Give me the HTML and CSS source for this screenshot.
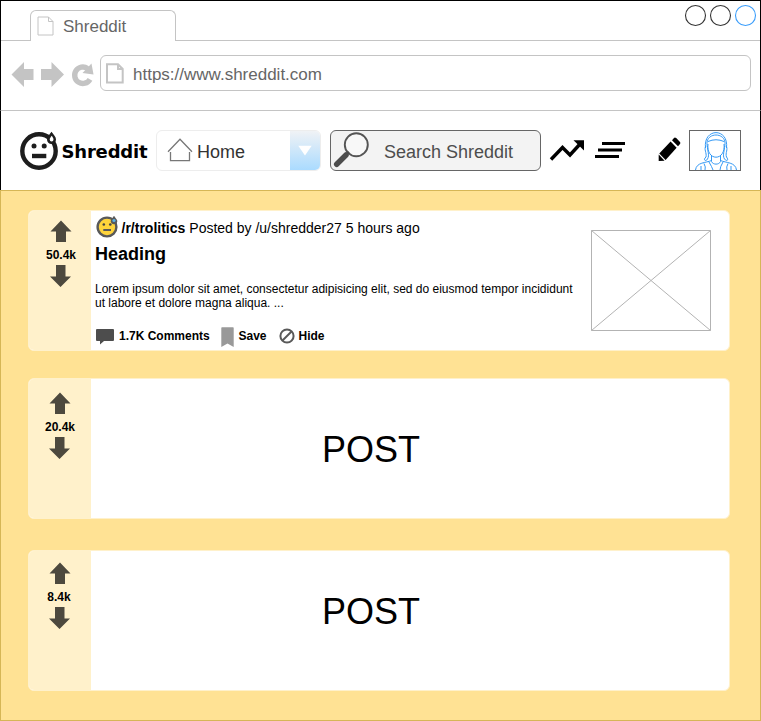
FILE: index.html
```html
<!DOCTYPE html>
<html lang="en">
<head>
<meta charset="utf-8">
<title>Shreddit</title>
<link rel="stylesheet" href="styles.css">
</head>
<body>
<svg class="defs" width="0" height="0">
  <symbol id="up" viewBox="0 0 22 22"><path d="M11 0.5 21.5 11.5H16V22H6V11.5H0.5Z" fill="#4d493e"/></symbol>
  <symbol id="down" viewBox="0 0 22 22"><path d="M10.500 22 21 11.500H15.500V0H6V11.500H0Z" fill="#4d493e"/></symbol>
</svg>
<div class="window">
  <header class="tabs">
    <div class="tab">
      <svg class="tab-icon" width="17" height="20" viewBox="36.5 16.5 17 20"><path d="M37.5 17.5H48L52.5 22V35.5H37.5ZM48 17.5V22H52.5" fill="#fff" stroke="#c4c4c4"/></svg>
      <span class="tab-title">Shreddit</span>
    </div>
    <svg class="controls" width="74" height="24" viewBox="684 4 74 24" fill="none" stroke-width="1.1"><circle cx="695.5" cy="15.5" r="10" stroke="#333"/><circle cx="720.5" cy="15.5" r="10" stroke="#333"/><circle cx="745.5" cy="15.5" r="10" stroke="#3a9dfb"/></svg>
  </header>
  <div class="address-row">
    <svg width="84" height="30" viewBox="11 60 84 30" fill="#c4c4c4"><path d="M11.500 74.500 24 62V69H33.500V80H24V87Z"/><path d="M64 74.500 51.500 62V69H41V80H51.500V87Z"/><path d="M90 79.300A8.200 8.200 0 1 1 87.500 68.500" fill="none" stroke="#c4c4c4" stroke-width="5.400"/><path d="M91.500 63.500 93.500 74.500 82.500 73Z"/></svg>
    <div class="address">
      <svg width="18" height="21" viewBox="106 63 18 21"><path d="M107 64.300H118L122.700 69V82.500H107ZM118 64.300V69H122.700" fill="#fff" stroke="#c4c4c4" stroke-width="2"/></svg>
      <span>https://www.shreddit.com</span>
    </div>
  </div>
  <nav class="nav">
    <svg class="logo" width="40" height="40" viewBox="19 131 40 40"><circle cx="39" cy="151" r="16.700" fill="none" stroke="#1d1d1d" stroke-width="4.400"/><circle cx="34" cy="146" r="2.500" fill="#1d1d1d"/><circle cx="44.200" cy="146" r="2.500" fill="#1d1d1d"/><path d="M32 153.800H46.300V158.200H32Z" fill="#1d1d1d"/><path d="M51.500 131.800C53.500 134.500 56 137 56 139.500A4.500 4.500 0 0 1 47 139.500C47 137 49.500 134.500 51.500 131.800Z" fill="#1d1d1d"/><path d="M51.700 135.800C52.700 137.200 53.500 138.300 53.500 139.600A1.900 1.900 0 0 1 49.700 139.600C49.700 138.300 50.700 137.200 51.700 135.800Z" fill="#fff"/></svg>
    <span class="brand">Shreddit</span>
    <div class="select">
      <svg width="26" height="25" viewBox="167 138 26 25" fill="none" stroke="#777" stroke-width="1.300"><path d="M168 151.700 180 139.300 192 151.700"/><path d="M170.500 152V160.700H189.500V152"/></svg>
      <span>Home</span>
      <div class="select-arrow"><svg width="14" height="11" viewBox="0 0 14 11"><path d="M0.300 0.700H13.700L7 10.500Z" fill="#fff"/></svg></div>
    </div>
    <div class="search">
      <svg width="38" height="38" viewBox="332 131 38 38"><circle cx="356.300" cy="144.700" r="11.500" fill="#f8f8f8" stroke="#555" stroke-width="1.900"/><path d="M336.700 164.300 346 155" stroke="#4d4d4d" stroke-width="5.500" stroke-linecap="round"/><path d="M346 155 349 152" stroke="#4d4d4d" stroke-width="2.500"/></svg>
      <span>Search Shreddit</span>
    </div>
    <svg class="trend" width="36" height="24" viewBox="549 138 36 24"><path d="M551 159.500 562.500 147.500 570 155 580.500 143.500" fill="none" stroke="#000" stroke-width="3.400"/><path d="M573.500 140.200H584V150.500Z"/></svg>
    <svg class="sort" width="30" height="18" viewBox="595 141 30 18"><path d="M602 142H625V145H602ZM598 148.500H622V151.500H598ZM595 155H619V158H595Z"/></svg>
    <svg class="edit" width="24" height="26" viewBox="657 136 24 26"><path d="M672 140.200 674 137.900Q674.800 137 676.200 138L680 142Q680.800 143 680 143.900L678 146.200Z"/><path d="M670.600 141.600 676.600 147.700 665.600 160 659.300 153.500Z"/><path d="M658.700 154.600 664.600 160.700 658.700 161Z"/></svg>
    <div class="avatar">
      <svg width="50" height="40" viewBox="690 131 50 40" fill="none" stroke="#3499f5" stroke-width="1"><path d="M707.500 148C703 132 729 132 724.500 148"/><path d="M705.500 149C703 128.500 729 128.500 726.500 149"/><path d="M708 142.500Q716 139 724 142.500"/><path d="M708 145C707 153 711 158.200 716 158.200S725 153 724 145"/><path d="M706 147C703.500 150 707 154 706 158 702.500 161 706 163 707.500 160 710 156 707 151 707.500 147"/><path d="M726 147C728.500 150 725 154 726.500 158 729 161 727 163 724.500 160 722 156 725 151 724.500 147"/><path d="M711.500 156.500V162.500C713 166 719 166 720.500 162.500V156.500"/><path d="M711.500 161.500C706 164 696.500 163 695.500 171M720.500 161.500C726 164 735.500 163 736.500 171"/><path d="M704 164.500Q706 168 705 171M709 163Q712 168 713 171M728 164.500Q726 168 727 171M723 163Q720 168 720 171M701 167V171M731 167V171"/></svg>
    </div>
  </nav>
  <main class="feed">
    <article class="post">
      <aside class="votes first"><svg width="22" height="22"><use href="#up"/></svg><b>50.4k</b><svg width="22" height="22"><use href="#down"/></svg></aside>
      <div class="body">
        <div class="content">
          <div class="meta">
            <svg width="23" height="23" viewBox="95 215 23 23"><circle cx="107" cy="227" r="9.400" fill="#ffd43b" stroke="#595959" stroke-width="2.400"/><circle cx="103.800" cy="224.500" r="1.300" fill="#444"/><circle cx="110.300" cy="224.500" r="1.300" fill="#444"/><path d="M103.300 230H111" stroke="#595959" stroke-width="2"/><path d="M114 215.800 117 220A3.200 3.200 0 1 1 111 220Z" fill="#595959"/><circle cx="114" cy="220.500" r="1.600" fill="#5ab0e5"/></svg>
            <b>/r/trolitics</b><span>Posted by /u/shredder27 5 hours ago</span>
          </div>
          <h1>Heading</h1>
          <p>Lorem ipsum dolor sit amet, consectetur adipisicing elit, sed do eiusmod tempor incididunt<br>ut labore et dolore magna aliqua. ...</p>
          <div class="actions">
            <svg width="18" height="16" viewBox="96 329 18 16"><path d="M97 329H113Q114 329 114 330V340Q114 341 113 341H104L100 344.500V341H97Q96 341 96 340V330Q96 329 97 329Z" fill="#4d4d4d"/></svg>
            <b class="comments">1.7K Comments</b>
            <svg width="13" height="20" viewBox="221 327 13 20"><path d="M222 327.300H233Q233.700 327.300 233.700 328V347L227.500 343.500 221.300 347V328Q221.300 327.300 222 327.300Z" fill="#999"/></svg>
            <b class="save">Save</b>
            <svg class="ban" width="16" height="16" viewBox="278.500 327.500 16 16" fill="none" stroke="#595959" stroke-width="2"><circle cx="286.500" cy="335.500" r="6.600"/><path d="M282 340 291 331"/></svg>
            <b class="hide">Hide</b>
          </div>
        </div>
        <svg class="thumb" width="120" height="101" viewBox="0 0 120 101" fill="none" stroke="#b3b3b3"><path d="M0.500 0.500H119.500V100.500H0.500ZM0.500 0.500 119.500 100.500M119.500 0.500 0.500 100.500"/></svg>
      </div>
    </article>
    <article class="post second">
      <aside class="votes"><svg width="22" height="22"><use href="#up"/></svg><b>20.4k</b><svg width="22" height="22"><use href="#down"/></svg></aside>
      <div class="body placeholder"><span>POST</span></div>
    </article>
    <article class="post third">
      <aside class="votes"><svg width="22" height="22"><use href="#up"/></svg><b>8.4k</b><svg width="22" height="22"><use href="#down"/></svg></aside>
      <div class="body placeholder"><span>POST</span></div>
    </article>
  </main>
</div>
</body>
</html>
```
FILE: styles.css
```css
* { box-sizing: border-box; }
body { margin: 0; font-family: "Liberation Sans", Arial, sans-serif; color: #000; background: #fff; }
svg { display: block; flex: none; }
.defs { position: absolute; }
.window { width: 761px; height: 721px; display: flex; flex-direction: column; overflow: hidden; }
.tabs, .address-row, .nav { border: 0 solid #000; border-width: 0 1px; display: flex; flex: none; }
.tabs { height: 41px; border-top-width: 1px; padding: 9px 2px 0 29px; justify-content: space-between; background: linear-gradient(#c4c4c4, #c4c4c4) 0 100% / 100% 1px no-repeat; }
.tab { width: 146px; height: 31px; border: 1px solid #c4c4c4; border-bottom: 0; border-radius: 6px 6px 0 0; background: #fff; display: flex; padding: 5px 0 0 5.500px; }
.tab-title { font-size: 17px; line-height: 22px; color: #666; margin-left: 9.500px; }
.controls { margin-top: -6px; }
.address-row { height: 70px; padding: 14px 9px 0 10px; border-bottom: 1px solid #c4c4c4; }
.address-row > svg { margin-top: 5px; }
.address { flex: 1; height: 36px; margin-left: 5px; border: 1px solid #c4c4c4; border-radius: 6px; display: flex; align-items: center; padding-left: 5px; font-size: 17px; color: #666; }
.address span { margin-left: 9px; padding-top: 4px; }
.nav { height: 79px; padding: 19px 19px 0 18px; }
.logo { margin-top: 1px; }
.brand { font: bold 18px/24px "DejaVu Sans", sans-serif; width: 95px; padding: 10px 0 0 2.500px; letter-spacing: -0.180px; }
.select { width: 165px; height: 41px; margin-left: 2px; border: 1px solid #ededed; border-radius: 6px; display: flex; align-items: center; padding-left: 10px; font-size: 18px; color: #333; overflow: hidden; }
.select span { margin-left: 4px; padding-top: 4px; }
.select-arrow { margin-left: auto; width: 30px; height: 39px; background: linear-gradient(#f0f2f5, #aadbff); display: flex; align-items: center; justify-content: center; }
.search { width: 211px; height: 41px; margin-left: 9px; border: 1px solid #666; border-radius: 6px; background: #f3f3f3; display: flex; padding-left: 1px; font-size: 18px; line-height: 43px; color: #4d4d4d; }
.search span { margin-left: 14px; }
.trend { margin: 8px 0 0 8px; }
.sort { margin: 11px 0 0 10px; }
.edit { margin: 6px 0 0 32px; }
.avatar { width: 52px; height: 41px; margin-left: 8px; border: 1px solid #666; }
.avatar svg { margin-top: -1px; }
.feed { flex: 1; background: #ffe294; border: 1px solid #d6b656; padding: 19px 30px 0 27px; }
.post { height: 141px; display: flex; border: 1px solid #fff1cb; border-radius: 6px; background: #fff; overflow: hidden; }
.post.second { margin-top: 27px; }
.post.third { margin-top: 31px; }
.votes { width: 62px; background: #fff1cb; display: flex; flex-direction: column; align-items: center; padding-top: 13px; font-size: 12px; }
.votes b { height: 23px; line-height: 26px; }
.votes.first { padding: 9px 0 0 2px; }
.third .votes { padding-top: 11px; }
.third .votes b { padding-right: 2px; }
.body { flex: 1; display: flex; }
.content { width: 500px; padding: 4px 0 0 4px; }
.meta { display: flex; height: 23px; font-size: 14px; line-height: 26px; white-space: nowrap; }
.meta b { margin-left: 3.500px; }
.meta span { margin-left: 4px; }
h1 { margin: 4px 0 0; font-size: 18px; line-height: 24px; }
p { margin: 16px 0 0; font-size: 12px; line-height: 14px; white-space: nowrap; }
.actions { display: flex; align-items: flex-start; margin-top: 17px; padding-left: 1px; font-size: 12px; line-height: 18px; }
.actions > svg:first-child { margin-top: 2px; }
.comments { margin-left: 5px; width: 102px; }
.save { margin-left: 4.500px; width: 40px; }
.ban { margin-top: 1px; }
.hide { margin-left: 4px; }
.thumb { margin-top: 19px; }
.placeholder { padding: 49px 0 0 231px; font-size: 36px; line-height: 44px; }
.third .placeholder { padding-top: 39px; }
```
